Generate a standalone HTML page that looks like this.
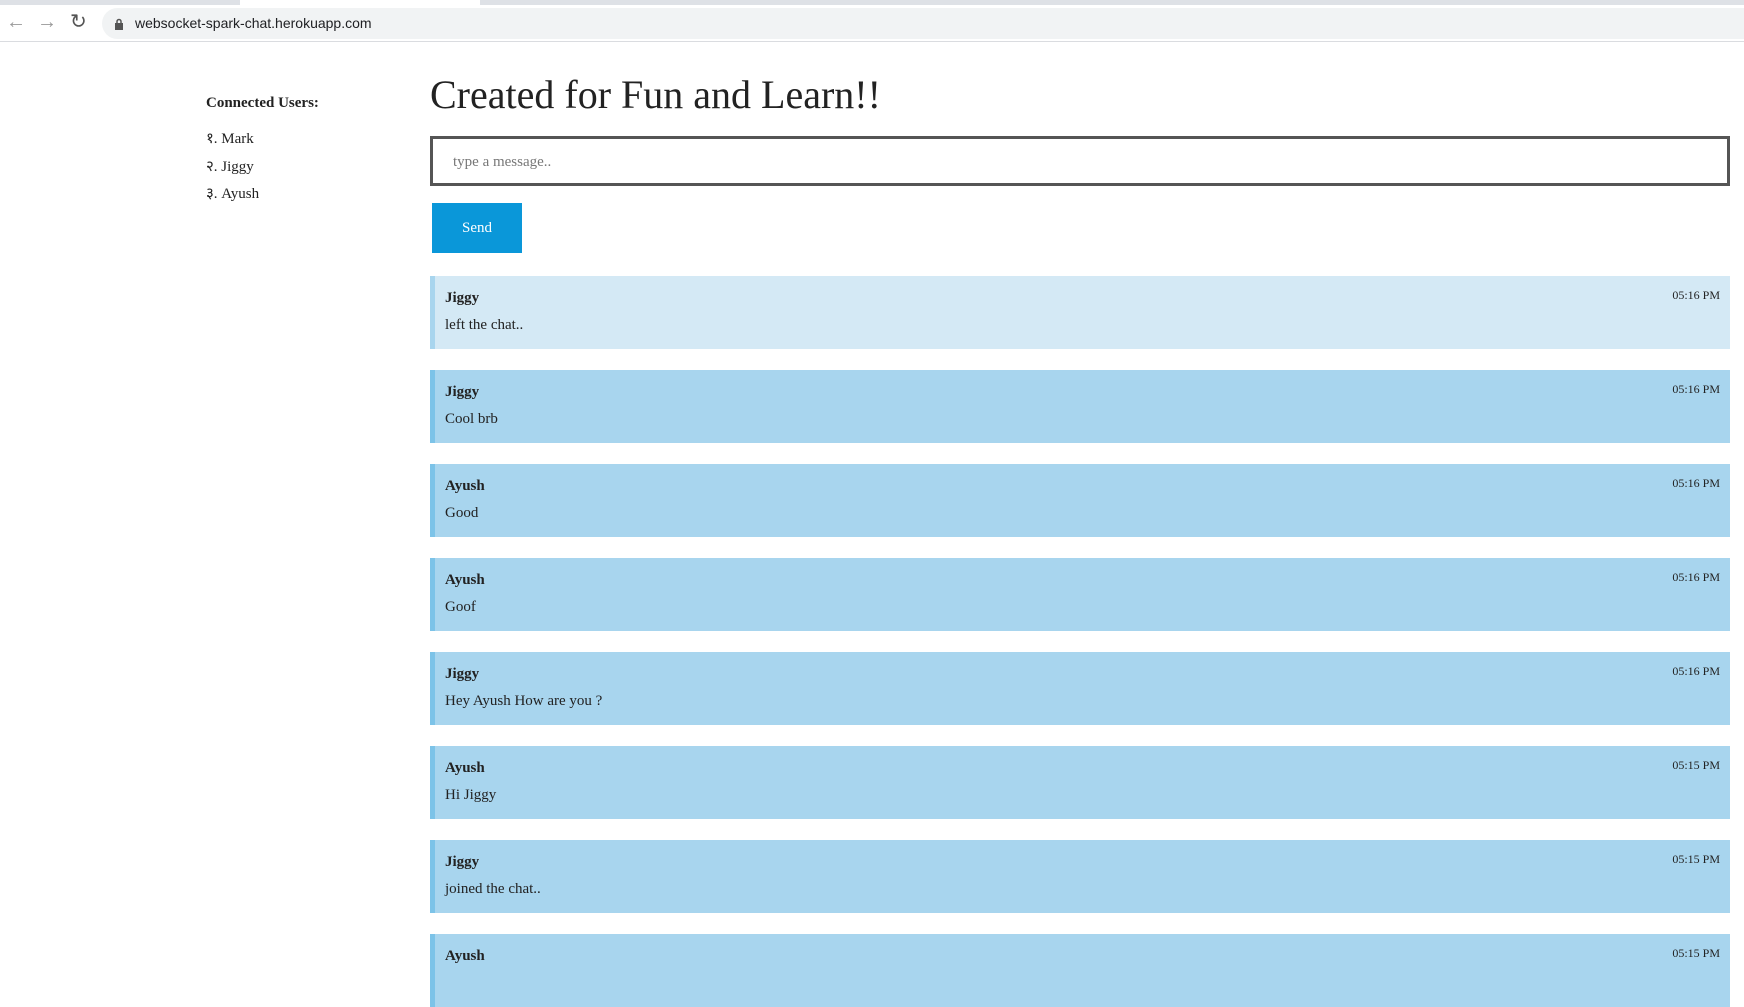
<!DOCTYPE html>
<html><head><meta charset="utf-8"><style>
*{margin:0;padding:0;box-sizing:border-box}
body{width:1744px;height:968px;overflow:hidden;background:#fff;font-family:"Liberation Serif",serif;color:#222;position:relative}
.tabs{position:absolute;left:0;top:0;width:1744px;height:5px;background:#dee1e6}
.tabs .t{position:absolute;left:240px;top:0;width:240px;height:5px;background:#fff}
.bar{position:absolute;left:0;top:5px;width:1744px;height:37px;background:#fff;border-bottom:1px solid #dadce0}
.url{position:absolute;left:102px;top:3px;width:1660px;height:31px;border-radius:16px;background:#f1f3f4;font-family:"Liberation Sans",sans-serif;font-size:14px;color:#202124;line-height:31px;padding-left:33px}
.ab{position:absolute;top:7px;font-family:"Liberation Sans",sans-serif;font-size:20px;color:#999;line-height:20px}
.side{position:absolute;left:206px;top:95px}
.side h4{font-size:15px;font-weight:bold;margin-bottom:16px}
.side div{font-size:15px;height:27.5px}
h1{position:absolute;left:430px;top:71px;font-size:40px;font-weight:normal}
.inp{position:absolute;left:430px;top:136px;width:1300px;height:50px;border:3px solid #555;font-size:15px;color:#777;padding:15px 20px}
.send{position:absolute;left:432px;top:203px;width:90px;height:50px;background:#0a97d9;color:#fff;font-size:15px;text-align:center;line-height:50px}
.m{position:absolute;left:430px;width:1300px;height:73px;background:#a8d5ee;border-left:5px solid #7cc3e8;padding:0 10px}
.m.f{background:#d4e9f5;border-left-color:#a8d5ee}
.m b{position:absolute;left:10px;top:14px;font-size:15px}
.m span{position:absolute;left:10px;top:41px;font-size:15px}
.m i{position:absolute;right:10px;top:12px;font-size:12px;font-style:normal}
</style></head><body>
<div class="tabs"><div class="t"></div></div>
<div class="bar">
<span class="ab" style="left:6px">&#8592;</span><span class="ab" style="left:37px">&#8594;</span><span class="ab" style="left:70px;color:#555">&#8635;</span>
<div class="url"><svg style="position:absolute;left:12px;top:10px" width="10" height="12" viewBox="0 0 10 12"><rect x="1" y="5" width="8" height="7" fill="#555"/><path d="M3 5V3.5a2 2 0 0 1 4 0V5" stroke="#555" stroke-width="1.5" fill="none"/></svg>websocket-spark-chat.herokuapp.com</div>
</div>
<div class="side"><h4>Connected Users:</h4><div>१. Mark</div><div>२. Jiggy</div><div>३. Ayush</div></div>
<h1>Created for Fun and Learn!!</h1>
<div class="inp">type a message..</div>
<div class="send">Send</div>
<div class="m f" style="top:276px"><b>Jiggy</b><span>left the chat..</span><i>05:16 PM</i></div>
<div class="m" style="top:370px"><b>Jiggy</b><span>Cool brb</span><i>05:16 PM</i></div>
<div class="m" style="top:464px"><b>Ayush</b><span>Good</span><i>05:16 PM</i></div>
<div class="m" style="top:558px"><b>Ayush</b><span>Goof</span><i>05:16 PM</i></div>
<div class="m" style="top:652px"><b>Jiggy</b><span>Hey Ayush How are you ?</span><i>05:16 PM</i></div>
<div class="m" style="top:746px"><b>Ayush</b><span>Hi Jiggy</span><i>05:15 PM</i></div>
<div class="m" style="top:840px"><b>Jiggy</b><span>joined the chat..</span><i>05:15 PM</i></div>
<div class="m" style="top:934px"><b>Ayush</b><span></span><i>05:15 PM</i></div>
</body></html>
